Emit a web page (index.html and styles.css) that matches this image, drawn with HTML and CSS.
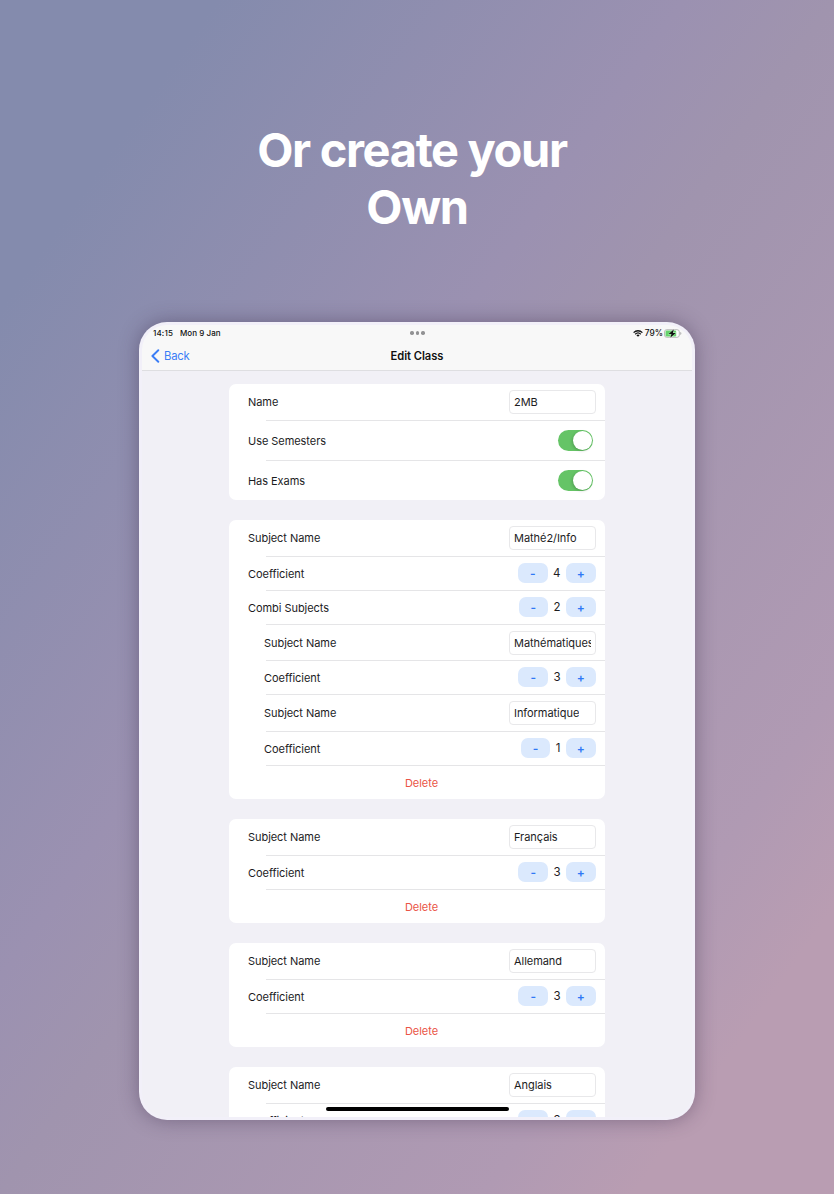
FILE: index.html
```
<!DOCTYPE html>
<html lang="en">
<head>
<meta charset="utf-8">
<title>Edit Class</title>
<link rel="stylesheet" href="styles.css">
</head>
<body>
<main class="page">
  <h1 class="headline"><span class="line-one">Or create your</span><br>Own</h1>
  <section class="device">
    <div class="screen">
      <header class="topbar">
        <div class="status">
          <div class="status-left"><span class="clock">14:15</span><span class="date">Mon 9 Jan</span></div>
          <div class="dots"><i></i><i></i><i></i></div>
          <div class="status-right">
            <svg class="wifi" viewBox="0 0 20 14" fill="none" stroke="#111" stroke-width="2.6"><path d="M1.2 5.2C6.2.3 13.8.3 18.8 5.2M4.4 8.4c3.2-3.1 8-3.1 11.2 0"/><path d="M6.8 10.4Q10 7.6 13.2 10.4L10 13.6Z" fill="#111" stroke="none"/></svg>
            <span class="percent">79%</span>
            <svg class="battery" viewBox="0 0 18 9"><rect x=".5" y=".7" width="14.8" height="7.6" rx="2.2" fill="#fff" stroke="#a9a9a9" stroke-width=".8"/><rect x="1.5" y="1.6" width="10.7" height="5.8" rx="1.2" fill="#65d36c"/><path d="M16.3 3.1q1.1.4 1.1 1.4t-1.1 1.4z" fill="#a9a9a9"/><path d="M9.9.3 4.6 5.1h2.9L6.2 8.8 11.8 3.9H8.9z" fill="#111" stroke="#fff" stroke-width=".5" paint-order="stroke"/></svg>
          </div>
        </div>
        <nav class="navbar">
          <div class="back"><svg class="chevron" viewBox="0 0 9 14" fill="none" stroke="#3b7df6" stroke-width="1.9" stroke-linecap="round" stroke-linejoin="round"><path d="M7.3 1.2 1.4 7l5.9 5.8"/></svg><span>Back</span></div>
          <div class="title">Edit Class</div>
          <div></div>
        </nav>
      </header>
      <div class="content">
        <section class="card">
          <div class="row field-row"><span>Name</span><div class="field"><span>2MB</span></div></div>
          <div class="row switch-row"><span>Use Semesters</span><div class="switch"><i></i></div></div>
          <div class="row switch-row last"><span>Has Exams</span><div class="switch"><i></i></div></div>
        </section>
        <section class="card">
          <div class="row field-row"><span>Subject Name</span><div class="field"><span>Mathé2/Info</span></div></div>
          <div class="row"><span>Coefficient</span><div class="stepper"><b>-</b><em>4</em><b>+</b></div></div>
          <div class="row"><span>Combi Subjects</span><div class="stepper"><b>-</b><em>2</em><b>+</b></div></div>
          <div class="row field-row nested tight"><span>Subject Name</span><div class="field"><span>Mathématiques</span></div></div>
          <div class="row nested"><span>Coefficient</span><div class="stepper"><b>-</b><em>3</em><b>+</b></div></div>
          <div class="row field-row nested"><span>Subject Name</span><div class="field"><span>Informatique</span></div></div>
          <div class="row nested"><span>Coefficient</span><div class="stepper"><b>-</b><em>1</em><b>+</b></div></div>
          <div class="row delete last"><span>Delete</span></div>
        </section>
        <section class="card">
          <div class="row field-row"><span>Subject Name</span><div class="field"><span>Français</span></div></div>
          <div class="row"><span>Coefficient</span><div class="stepper"><b>-</b><em>3</em><b>+</b></div></div>
          <div class="row delete last"><span>Delete</span></div>
        </section>
        <section class="card">
          <div class="row field-row"><span>Subject Name</span><div class="field"><span>Allemand</span></div></div>
          <div class="row"><span>Coefficient</span><div class="stepper"><b>-</b><em>3</em><b>+</b></div></div>
          <div class="row delete last"><span>Delete</span></div>
        </section>
        <section class="card">
          <div class="row field-row"><span>Subject Name</span><div class="field"><span>Anglais</span></div></div>
          <div class="row"><span>Coefficient</span><div class="stepper"><b>-</b><em>3</em><b>+</b></div></div>
        </section>
      </div>
      <div class="home-indicator"></div>
    </div>
  </section>
</main>
</body>
</html>
```
FILE: styles.css
```
* { box-sizing: border-box; }
body { margin: 0; font-family: Inter, "Liberation Sans", sans-serif; color: #1c1c1e; }
.page {
  width: 834px; height: 1194px; overflow: hidden;
  display: flex; flex-direction: column; align-items: center;
  background: linear-gradient(to bottom right, #848bad 0%, #848bad 13%, #9b91b1 41%, #a094ae 50%, #b09ab3 79%, #b99db2 88%, #b99db2 100%);
}
.headline {
  margin: 121px 0 0; height: 201px; color: #fff; text-align: center;
  font-size: 47px; line-height: 57px; font-weight: 700; letter-spacing: -1.35px; white-space: nowrap;
}
.line-one { margin-right: 10px; }
.device {
  width: 556px; height: 797.5px; padding: 3px; border-radius: 28px;
  background: #f2f0f9; box-shadow: 0 0 20px rgba(50, 35, 65, .4);
}
.screen {
  position: relative; height: 791.5px; overflow: hidden;
  border-radius: 25px 25px 24px 24px; background: #f1f0f6;
}
.topbar { height: 46px; background: #f8f8f8; border-bottom: 1px solid #dedee1; }
.status { height: 16px; margin-bottom: 1px; padding: 0 10px 0 11px; display: grid; grid-template-columns: 1fr auto 1fr; align-items: center; font-size: 8px; font-weight: 500; color: #111; white-space: nowrap; }
.status-left { display: flex; gap: 7px; }
.status-right { display: flex; justify-content: flex-end; align-items: center; }
.clock { letter-spacing: .15px; }
.date { letter-spacing: .05px; }
.percent { margin: 0 1px 0 2px; font-size: 8.3px; }
.wifi { width: 10px; height: 7px; }
.battery { width: 18px; height: 9px; }
.dots { display: flex; gap: 2px; }
.dots i { width: 3.4px; height: 3.4px; border-radius: 50%; background: #929294; }
.navbar { height: 28px; padding: 0 9px; display: grid; grid-template-columns: 1fr auto 1fr; align-items: center; }
.back { display: flex; align-items: center; gap: 4px; color: #3b7df6; font-size: 11.3px; letter-spacing: -.2px; }
.chevron { width: 9px; height: 14px; }
.title { font-size: 11.2px; font-weight: 600; letter-spacing: -.05px; color: #111; }
.content { padding: 13px 87px 0; display: flex; flex-direction: column; gap: 20px; }
.card { background: #fff; border-radius: 7px; }
.row {
  height: 34px; padding: 0 9.5px 1px 19px; display: flex; align-items: center; justify-content: space-between;
  font-size: 11px; letter-spacing: -.05px; white-space: nowrap;
  background: linear-gradient(#e5e5e7, #e5e5e7) 37px 100% / 100% 1px no-repeat;
}
.field-row { height: 37px; padding-right: 9px; }
.tight { height: 36px; }
.switch-row { height: 40px; padding-right: 12px; }
.nested { padding-left: 35px; }
.last { background: none; height: 33px; padding-bottom: 0; }
.switch-row.last { height: 39px; }
.delete { justify-content: center; padding: 0 0 0 9px; color: #ea5546; }
.field { width: 87px; height: 24px; padding: 0 4px; border: 1px solid #e8e8ea; border-radius: 4px; display: flex; align-items: center; }
.field span { overflow: hidden; line-height: 20px; }
.switch { width: 35px; height: 21px; padding: 1px; border-radius: 11px; display: flex; justify-content: flex-end; background: #65c466; }
.switch i { width: 19px; height: 19px; border-radius: 50%; background: #fff; box-shadow: -1px 1px 3px rgba(0, 0, 0, .18); }
.stepper { display: flex; align-items: center; padding-bottom: .5px; }
.stepper b { width: 29.5px; height: 20px; border-radius: 7px; background: #dbe9fd; color: #2f78f6; display: flex; align-items: center; justify-content: center; font-size: 12px; font-weight: 600; }
.stepper em { margin: 0 5.5px; font-size: 11.5px; font-style: normal; }
.home-indicator { position: absolute; left: 183.5px; bottom: 5.5px; width: 183px; height: 4px; border-radius: 2px; background: #000; }
```
